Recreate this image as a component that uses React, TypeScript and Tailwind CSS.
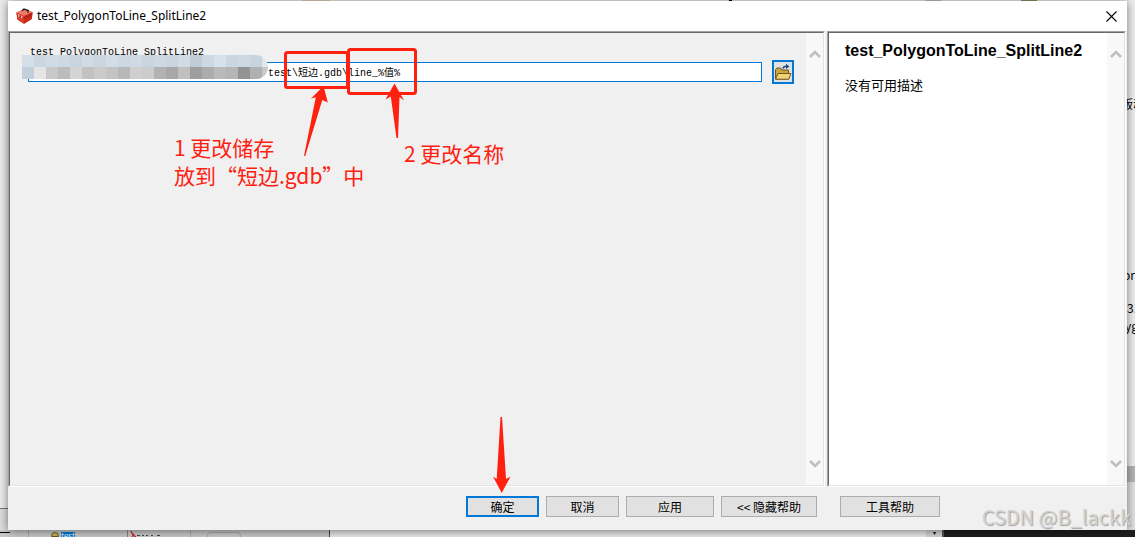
import React, { useState } from "react";

const TOOL_NAME = "test_PolygonToLine_SplitLine2";

// pixelated cover over the private part of the path
const MOSAIC_TOP = [
  "#d5dfe8", "#cbd7e0", "#d0dce5", "#cedae3", "#c8d4de", "#d0dbe4", "#cbd6df",
  "#d3dde5", "#ccd8e2", "#cfdae4", "#c8d4de", "#cdd8e1", "#cad5df", "#d0dbe3",
  "#c0ccd6", "#ccd8e2", "#d6e2eb", "#cad6e0", "#cdd9e2", "#c9d3dc",
];
const MOSAIC_BOTTOM = [
  "#c3cfda", "#e5e5e5", "#c8c8c8", "#bcbcbc", "#d4d4d4", "#c2c2c2", "#cbcbcb",
  "#c4c4c4", "#b8b8b8", "#cfcfcf", "#cccccc", "#b2b2b2", "#a8a8a8", "#c0c0c0",
  "#9e9e9e", "#acacac", "#bababa", "#b5b5b5", "#939393", "#b0b0b0",
];

const ToolboxIcon: React.FC = () => (
  <svg width="17" height="17" viewBox="0 0 17 17" aria-hidden="true">
    <path d="M0.5 4.5 8.5 1 16.5 4.2 15.8 11 8 15.8 1.3 11.5Z" fill="#b92a1c" />
    <path d="M0.5 4.5 8.5 1 16.5 4.2 8 8Z" fill="#ef7a66" />
    <path d="M0.5 4.5 8 8V15.8L1.3 11.5Z" fill="#e03a28" />
    <path d="M8 8 16.5 4.2 15.8 11 8 15.8Z" fill="#c92a1b" />
    <path d="M6 2.8 8 1.1 12.2 2.5 11.8 4.6" fill="none" stroke="#33211f" strokeWidth="1.5" />
    <path d="M0.8 6.6 8 10.2 16.2 6" fill="none" stroke="#8c1a10" strokeWidth="0.7" />
    <path d="M2.8 6.3v2.4M5.8 7.8v2.4" stroke="#f1e4e0" strokeWidth="1.1" />
  </svg>
);

const FolderIcon: React.FC = () => (
  <svg width="18" height="18" viewBox="0 0 18 18" aria-hidden="true">
    <path d="M1.5 16V6.5L3 5h3.5L8 7h6.5v9Z" fill="#c9a544" stroke="#70541a" />
    <path d="M1.5 16.2 4 10.5h13L14.7 16.2Z" fill="#f2d477" stroke="#70541a" />
    <path d="M9 5.5C9.3 3.8 10.6 3.2 12.5 3.2" fill="none" stroke="#14508c" strokeWidth="1.6" />
    <path d="M12 0.8 15.5 3.4 12 6Z" fill="#14508c" />
  </svg>
);

const Chevron: React.FC<{ up?: boolean }> = ({ up }) => (
  <svg width="12" height="10" viewBox="0 0 12 10" aria-hidden="true">
    <path
      d={up ? "M1 8 6 3l5 5" : "M1 2l5 5 5-5"}
      fill="none"
      stroke="#bfbfbf"
      strokeWidth="2.6"
    />
  </svg>
);

const ScrollBar: React.FC = () => (
  <div className="flex w-[17px] shrink-0 flex-col items-center justify-between bg-[#f8f8f8] py-4">
    <Chevron up />
    <Chevron />
  </div>
);

interface DialogButtonProps {
  children: React.ReactNode;
  className: string;
}

const DialogButton: React.FC<DialogButtonProps> = ({ children, className }) => (
  <button
    type="button"
    className={`h-[21px] whitespace-pre bg-[#e1e1e1] text-xs leading-4 text-black ${className}`}
  >
    {children}
  </button>
);

const Annotations: React.FC = () => (
  <>
    <svg
      className="pointer-events-none absolute left-0 top-0"
      width="420"
      height="130"
      viewBox="10 33 420 130"
      aria-hidden="true"
    >
      <g fill="none" stroke="#ff2010" strokeWidth="3">
        <rect x="285.5" y="52.5" width="62" height="35" rx="2" />
        <rect x="348.5" y="49.5" width="67" height="44" rx="2" />
      </g>
      <g fill="#ff2010">
        <path d="M323.5 86 311 98.5 315.8 97.2 304 156 305.2 156 322.3 100 327.8 102.5Z" />
        <path d="M394.5 83.5 385.5 99.5 390.8 96.5 396.5 138 398 138 399.5 97 404 100.5Z" />
      </g>
    </svg>
    <p className="absolute left-[164px] top-[100px] whitespace-nowrap text-[21px] leading-7 text-[#ff2010]">
      1 更改储存
      <br />
      放到“短边.gdb”中
    </p>
    <p className="absolute left-[394px] top-[106px] whitespace-nowrap text-[21px] leading-7 text-[#ff2010]">
      2 更改名称
    </p>
  </>
);

const App: React.FC = () => {
  const [path, setPath] = useState("test\\短边.gdb\\line_%值%");

  return (
    <div
      lang="zh-CN"
      className="relative flex min-h-screen flex-col overflow-hidden bg-[#ececec] font-['Noto_Sans_CJK_SC',sans-serif] text-black"
    >
      {/* Windows behind the dialog, top edge */}
      <div className="flex h-px">
        <div className="ml-[302px] w-7 bg-[#e0cdb4]" />
        <div className="ml-[399px] w-[3px] bg-black" />
        <div className="ml-[193px] w-4 bg-[#bdbdbd]" />
        <div className="ml-20 w-4 bg-[#8a8a5a]" />
      </div>

      <div className="flex grow">
        <div className="flex w-2 shrink-0 flex-col justify-end">
          <div className="h-[22px] border-t border-[#6b7480] bg-[#dddddd]" />
        </div>

        <div className="relative z-10 flex min-w-0 grow flex-col bg-[#f0f0f0] shadow-[0_1px_9px_rgba(0,0,0,0.5)]">
          {/* Title bar */}
          <header className="flex h-[30px] items-center bg-white pl-2 pr-2.5">
            <ToolboxIcon />
            <h1 className="ml-1 grow font-['Noto_Sans',sans-serif] text-xs">{TOOL_NAME}</h1>
            <button type="button" aria-label="关闭">
              <svg width="11" height="11" viewBox="0 0 11 11" aria-hidden="true">
                <path d="M0.5 0.5l10 10M10.5 0.5l-10 10" stroke="#000" strokeWidth="1.1" />
              </svg>
            </button>
          </header>

          <div className="flex grow gap-0.5 pr-px">
            {/* Parameters */}
            <main className="flex min-w-0 grow border border-b-white border-l-[#a0a0a0] border-r-white border-t-[#a0a0a0]">
              <div className="relative flex grow border border-b-[#e3e3e3] border-l-[#696969] border-r-[#e3e3e3] border-t-[#696969]">
                <div className="grow pl-[18px] pr-3 pt-3">
                  <label
                    htmlFor="output-path"
                    className="block pl-0.5 font-['Liberation_Mono','Noto_Sans_CJK_SC',monospace] text-[10px] leading-[15px]"
                  >
                    {TOOL_NAME}
                  </label>
                  <div className="flex items-center gap-2.5">
                    <input
                      id="output-path"
                      type="text"
                      value={path}
                      onChange={(e) => setPath(e.target.value)}
                      className="h-5 min-w-0 grow border border-[#0078d7] bg-white pb-0.5 pl-[239px] font-['Liberation_Mono','Noto_Sans_CJK_SC',monospace] text-[10px] outline-none"
                    />
                    <button
                      type="button"
                      aria-label="浏览"
                      className="flex h-6 w-[22px] items-center justify-center border-2 border-[#0078d7] bg-[#e1e1e1]"
                    >
                      <FolderIcon />
                    </button>
                  </div>
                </div>
                <ScrollBar />

                <div className="absolute left-3 top-[22px] overflow-hidden rounded-r-full">
                  {[MOSAIC_TOP, MOSAIC_BOTTOM].map((row, r) => (
                    <div key={r} className="flex">
                      {row.map((color, i) => (
                        <span key={i} className="h-3 w-3" style={{ backgroundColor: color }} />
                      ))}
                      <span className={r === 0 ? "h-3 w-1.5 bg-[#dde8f0]" : "h-3 w-1.5 bg-[#c8c8c8]"} />
                    </div>
                  ))}
                </div>
                <Annotations />
              </div>
            </main>

            {/* Help */}
            <aside className="flex w-[299px] shrink-0 border border-b-white border-l-[#a0a0a0] border-r-white border-t-[#a0a0a0]">
              <div className="flex grow border border-b-[#e3e3e3] border-l-[#696969] border-r-[#e3e3e3] border-t-[#696969] bg-white">
                <div className="min-w-0 grow pl-4 pt-2">
                  <h2 className="font-['Liberation_Sans',sans-serif] text-base font-bold leading-5">
                    {TOOL_NAME}
                  </h2>
                  <p className="mt-3.5 text-[13px] leading-5">没有可用描述</p>
                </div>
                <ScrollBar />
              </div>
            </aside>
          </div>

          <footer className="flex justify-end gap-[7px] pb-[13px] pr-[187px] pt-[9px]">
            <div className="relative flex">
              <DialogButton className="w-[73px] border-2 border-[#0078d7]">确定</DialogButton>
              <svg
                className="pointer-events-none absolute bottom-full left-[27px] mb-[3px]"
                width="18"
                height="76"
                viewBox="0 0 18 76"
                aria-hidden="true"
              >
                <path d="M7.5 0h1.5L13 62 17.5 59.5 8.7 76 0 59.5 3.7 62Z" fill="#ff2010" />
              </svg>
            </div>
            <DialogButton className="w-[73px] border border-[#adadad]">取消</DialogButton>
            <DialogButton className="w-[88px] border border-[#adadad]">应用</DialogButton>
            <DialogButton className="w-24 border border-[#adadad]">{"<< 隐藏帮助"}</DialogButton>
            <DialogButton className="ml-4 w-[100px] border border-[#adadad]">工具帮助</DialogButton>
          </footer>
        </div>

        <div className="flex w-2 shrink-0 flex-col overflow-hidden whitespace-nowrap bg-[#eeeeee] text-xs leading-4">
          <span className="-ml-1.5 mt-[95px]">版动</span>
          <span className="-ml-1 mt-[155px]">or</span>
          <span className="mt-[17px]">3.</span>
          <span className="-ml-0.5 mt-0.5">yg</span>
          <div className="mt-auto h-4 shrink-0 bg-[#b4b4b4]" />
          <div className="h-12 shrink-0 bg-[#e0e0e0]" />
        </div>
      </div>

      {/* Windows behind the dialog, bottom edge */}
      <div className="flex h-[7px] overflow-hidden bg-[#e8e8e8] text-[10px] leading-3">
        <div className="flex w-[330px] shrink-0 border-r border-[#444444] bg-[#c9c9c9]">
          <div className="mt-0.5 h-px w-2.5 bg-black" />
          <div className="ml-[18px] w-px bg-[#aaaaaa]" />
          <div className="ml-[22px] mt-0.5 w-2 rounded-t-sm border border-[#6b5a1e] bg-[#c9b35a]" />
          <div className="ml-0.5 mt-0.5 w-3.5 overflow-hidden bg-[#0078d7] text-[8px] leading-[8px] text-white">
            test
          </div>
          <div className="ml-[52px] w-px bg-[#888888]" />
          <svg className="ml-0.5" width="36" height="7" viewBox="0 0 36 7" aria-hidden="true">
            <path d="M1 1 3 5l3 2M2 7l2-3" fill="none" stroke="#d02020" strokeWidth="1.2" />
            <path d="M7 5.5h3m2 0h2m2 0h2m3 0h2m4 0h3" stroke="#444" />
          </svg>
          <div className="ml-6 w-px bg-[#aaaaaa]" />
          <div className="ml-4 mt-0.5 w-[34px] rounded-t border border-b-0 border-[#aaaaaa]" />
        </div>
        <div className="grow" />
        <div className="w-4 bg-[#d4d4d4] text-center text-[6px] leading-none">▾</div>
        <div className="w-[193px] shrink-0 border-l-2 border-[#555555] bg-[#1e1e1e]" />
      </div>

      <span className="pointer-events-none absolute bottom-1.5 right-1 z-20 font-['Noto_Sans_CJK_SC',sans-serif] text-xl leading-7 text-[#d2d2d2] [text-shadow:1px_1px_1px_#a0a0a0]">
        CSDN @B_lackk
      </span>
    </div>
  );
};

export default App;
